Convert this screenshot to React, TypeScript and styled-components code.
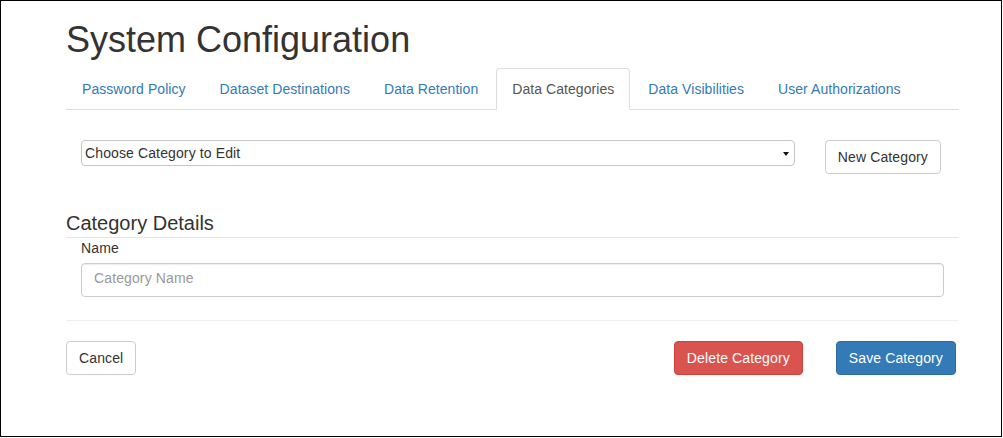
import React from 'react';
import styled, { createGlobalStyle, css } from 'styled-components';

const GlobalStyle = createGlobalStyle`
  html, body {
    margin: 0;
    padding: 0;
    background: #fff;
  }
  body {
    font-family: 'Liberation Sans', Arial, Helvetica, sans-serif;
    font-size: 14px;
    line-height: 20px;
    letter-spacing: 0.12px;
    color: #333;
  }
  * {
    box-sizing: border-box;
  }
`;

const Frame = styled.div`
  width: 1002px;
  height: 437px;
  border: 1px solid #000;
  background: #fff;
`;

const Container = styled.div`
  width: 893px;
  margin-left: 65px;
  padding-top: 19px;
`;

const Title = styled.h1`
  margin: 0 0 8px;
  font-size: 36px;
  line-height: 40px;
  font-weight: 500;
  letter-spacing: 0;
  color: #333;
`;

const TabList = styled.ul`
  display: flex;
  margin: 0;
  padding: 0;
  list-style: none;
  border-bottom: 1px solid #ddd;
  letter-spacing: 0.06px;
`;

const TabItem = styled.li`
  margin: 0 2px -1px 0;
`;

const TabLink = styled.a<{ active?: boolean }>`
  display: block;
  padding: 10px 15px;
  line-height: 20px;
  border: 1px solid transparent;
  border-radius: 4px 4px 0 0;
  color: #337ab7;
  text-decoration: none;
  cursor: pointer;
  ${(props) =>
    props.active &&
    css`
      color: #555;
      background: #fff;
      border-color: #ddd;
      border-bottom-color: transparent;
      cursor: default;
    `}
`;

const PickerRow = styled.div`
  display: flex;
  align-items: flex-start;
  margin-top: 30px;
  padding: 0 18px 0 15px;
`;

const SelectWrap = styled.div`
  position: relative;
  flex: 1;
  margin-right: 30px;

  &::after {
    content: '';
    position: absolute;
    right: 6px;
    top: 12px;
    border-left: 3.5px solid transparent;
    border-right: 3.5px solid transparent;
    border-top: 4px solid #111;
    pointer-events: none;
  }
`;

const Select = styled.select`
  display: block;
  width: 100%;
  height: 26px;
  padding: 0 3px;
  font-family: inherit;
  font-size: 14px;
  letter-spacing: inherit;
  color: #333;
  background: #fff;
  border: 1px solid #c6c6c6;
  border-radius: 4px;
  appearance: none;
  -webkit-appearance: none;
  outline: none;
`;

const Button = styled.button<{ variant?: 'default' | 'danger' | 'primary' }>`
  display: inline-block;
  height: 34px;
  padding: 6px 12px;
  font-family: inherit;
  font-size: 14px;
  line-height: 20px;
  letter-spacing: inherit;
  border: 1px solid #ccc;
  border-radius: 4px;
  background: #fff;
  color: #333;
  white-space: nowrap;
  cursor: pointer;
  ${(props) =>
    props.variant === 'danger' &&
    css`
      background: #d9534f;
      border-color: #d43f3a;
      color: #fff;
    `}
  ${(props) =>
    props.variant === 'primary' &&
    css`
      background: #337ab7;
      border-color: #2e6da4;
      color: #fff;
    `}
`;

const Legend = styled.div`
  margin-top: 36px;
  padding-bottom: 1px;
  font-size: 20px;
  line-height: 26px;
  letter-spacing: 0;
  color: #333;
  border-bottom: 1px solid #e5e5e5;
`;

const FormGroup = styled.div`
  padding: 0 15px;
`;

const Label = styled.label`
  display: block;
  margin-bottom: 5px;
  font-weight: normal;
`;

const TextInput = styled.input`
  display: block;
  width: 100%;
  height: 34px;
  padding: 4px 12px 8px;
  font-family: inherit;
  font-size: 14px;
  line-height: 20px;
  letter-spacing: inherit;
  color: #555;
  background: #fff;
  border: 1px solid #ccc;
  border-radius: 4px;
  box-shadow: inset 0 1px 1px rgba(0, 0, 0, 0.075);
  outline: none;

  &::placeholder {
    color: #999;
  }
`;

const Divider = styled.hr`
  margin: 23px 0 20px;
  border: 0;
  border-top: 1px solid #eee;
`;

const Footer = styled.div`
  display: flex;
  align-items: center;
  padding-right: 3px;
`;

const FooterRight = styled.div`
  display: flex;
  gap: 33px;
  margin-left: auto;
`;

const tabs = [
  'Password Policy',
  'Dataset Destinations',
  'Data Retention',
  'Data Categories',
  'Data Visibilities',
  'User Authorizations',
];

export default function App() {
  return (
    <>
      <GlobalStyle />
      <Frame>
        <Container>
          <Title>System Configuration</Title>
          <TabList>
            {tabs.map((t) => (
              <TabItem key={t}>
                <TabLink active={t === 'Data Categories'}>{t}</TabLink>
              </TabItem>
            ))}
          </TabList>

          <PickerRow>
            <SelectWrap>
              <Select defaultValue="">
                <option value="">Choose Category to Edit</option>
              </Select>
            </SelectWrap>
            <Button>New Category</Button>
          </PickerRow>

          <Legend>Category Details</Legend>
          <FormGroup>
            <Label htmlFor="cat-name">Name</Label>
            <TextInput id="cat-name" type="text" placeholder="Category Name" />
          </FormGroup>

          <Divider />

          <Footer>
            <Button>Cancel</Button>
            <FooterRight>
              <Button variant="danger">Delete Category</Button>
              <Button variant="primary">Save Category</Button>
            </FooterRight>
          </Footer>
        </Container>
      </Frame>
    </>
  );
}
